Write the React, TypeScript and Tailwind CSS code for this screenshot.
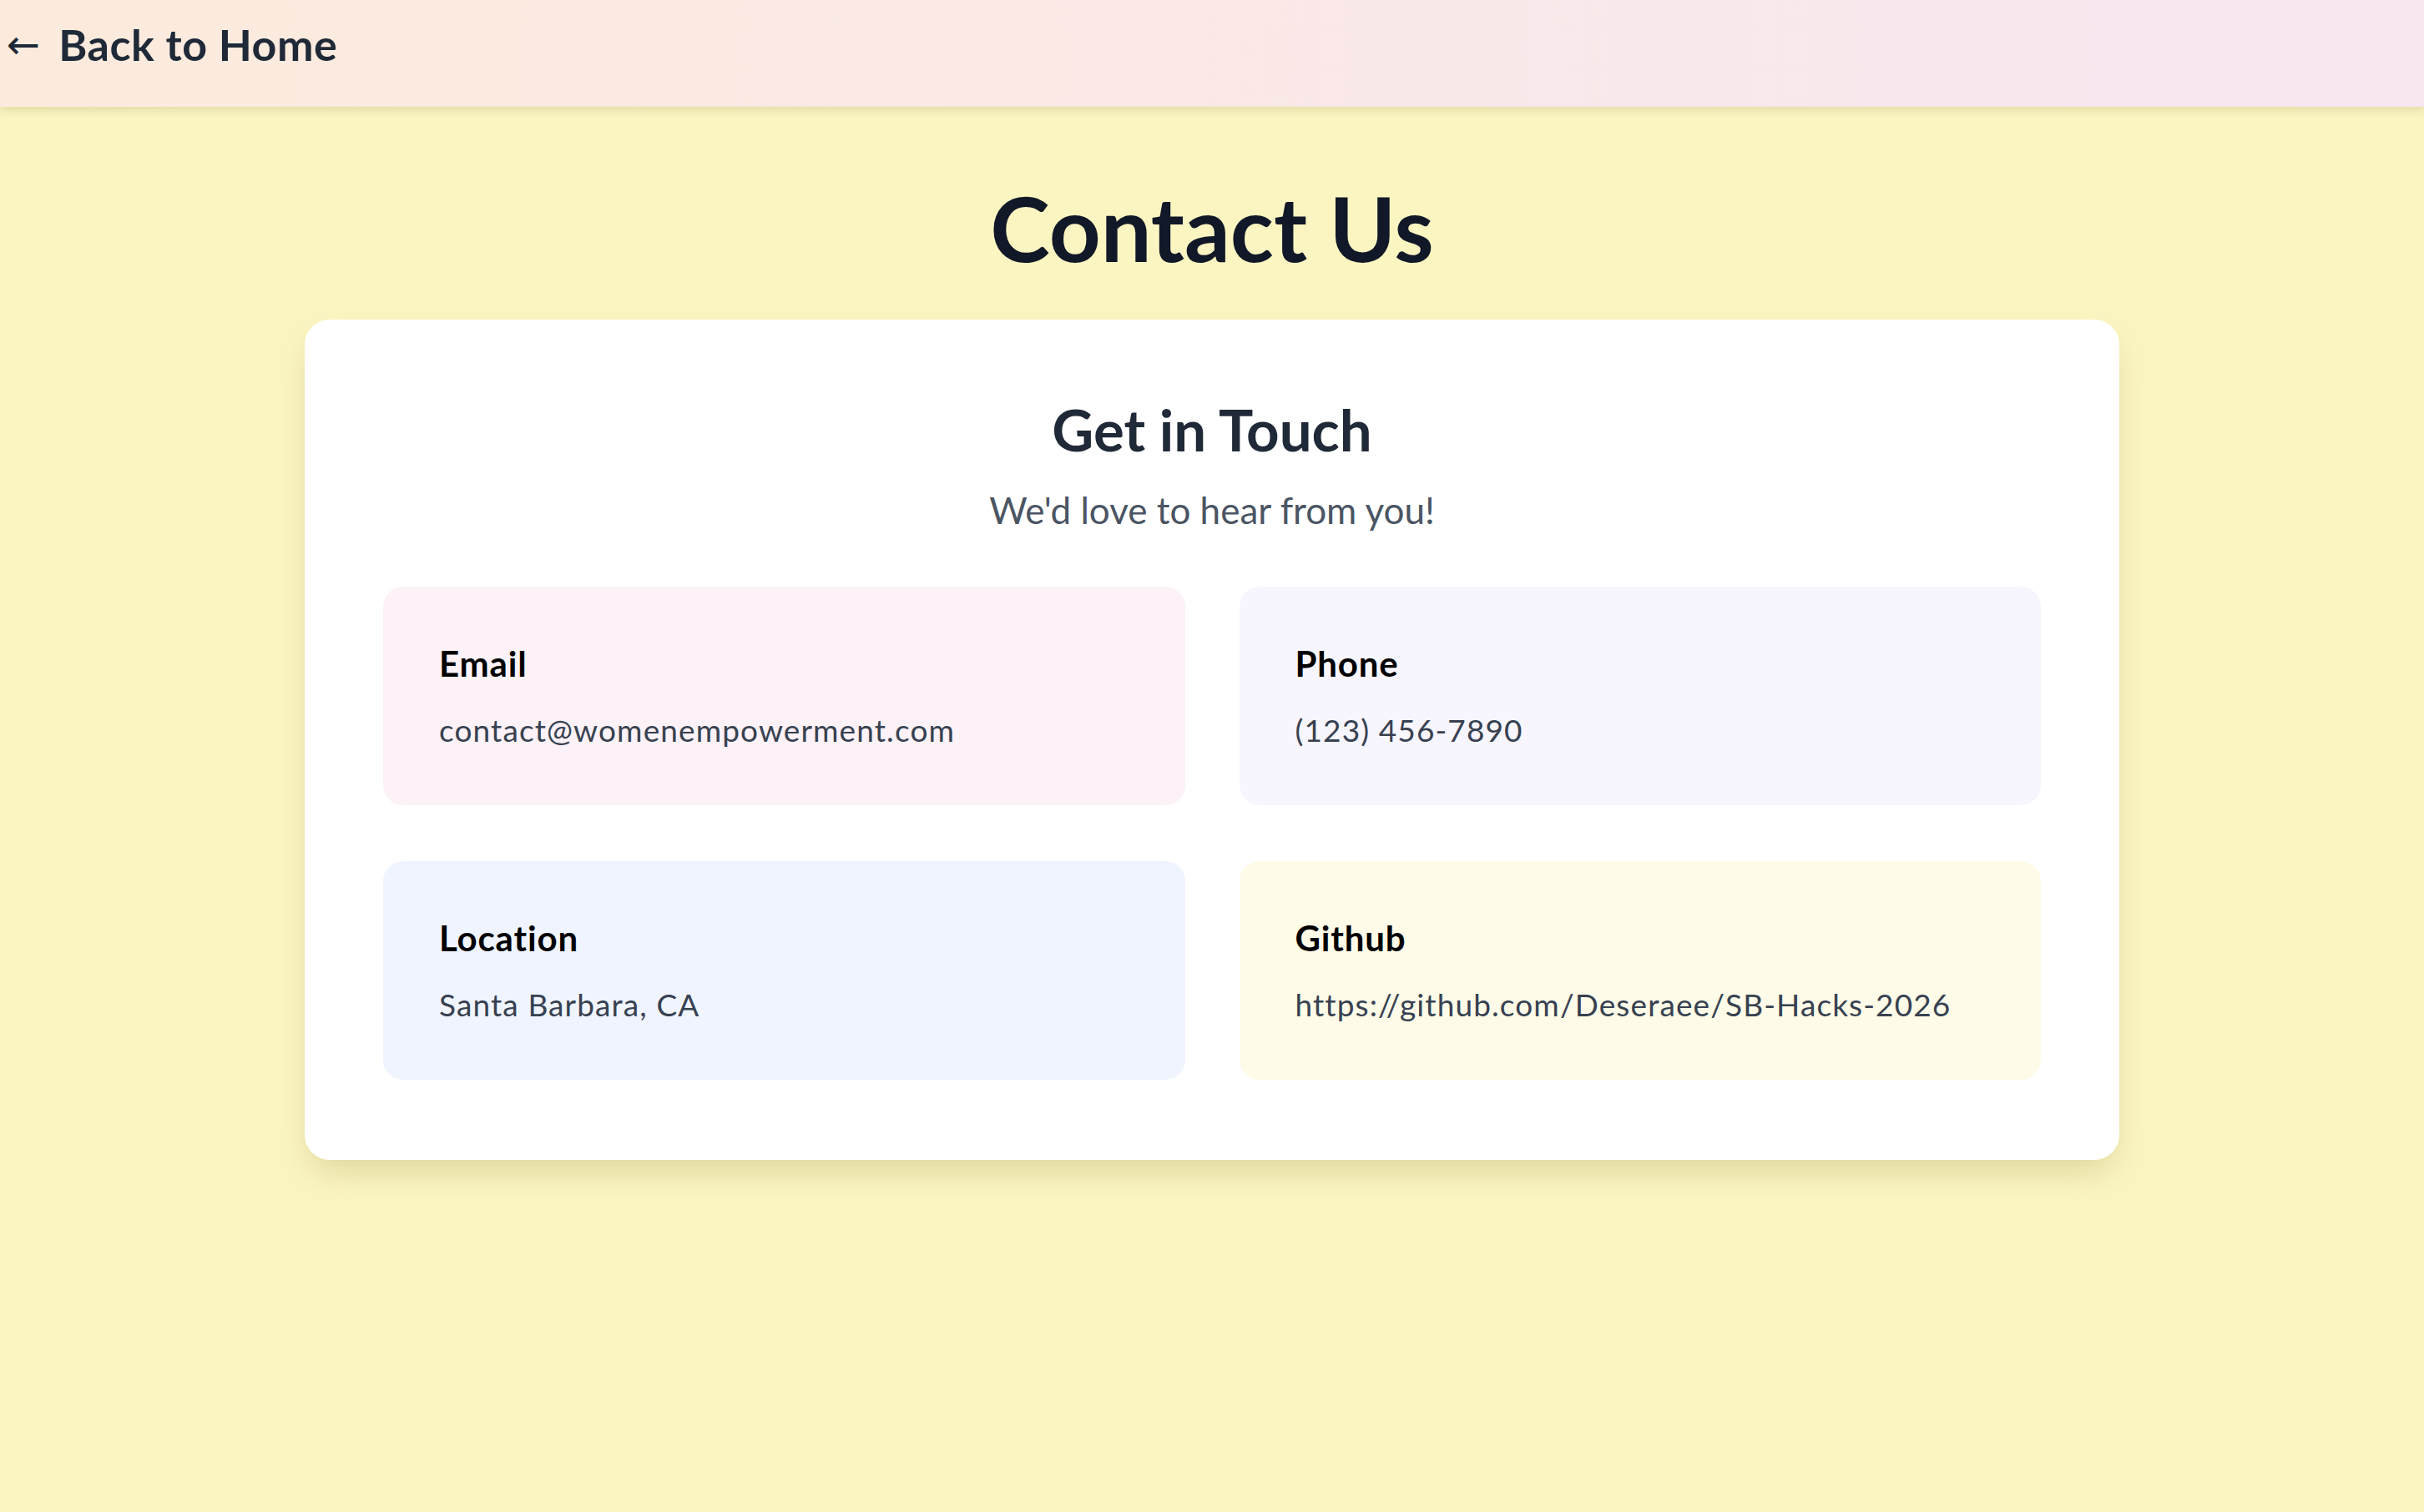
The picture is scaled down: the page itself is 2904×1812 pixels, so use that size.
import React from 'react';

// contact entries shown in the card grid
const contacts = [
  { label: 'Email', value: 'contact@womenempowerment.com', bg: 'bg-[#fcf2f7]' },
  { label: 'Phone', value: '(123) 456-7890', bg: 'bg-[#f7f5fe]' },
  { label: 'Location', value: 'Santa Barbara, CA', bg: 'bg-[#eff4fe]' },
  { label: 'Github', value: 'https://github.com/Deseraee/SB-Hacks-2026', bg: 'bg-[#fefbe8]' },
];

function ContactBox({ label, value, bg }: { label: string; value: string; bg: string }) {
  return (
    <div className={`${bg} rounded-[24px] pl-[67px] pr-[40px] pt-[64px] pb-[62px]`}>
      <h3 className="text-[42px] leading-[56px] font-bold tracking-[0.02em] text-black">{label}</h3>
      <p className="mt-[24px] text-[37px] leading-[56px] tracking-[0.03em] text-[#374151]">{value}</p>
    </div>
  );
}

export default function App() {
  return (
    <div
      className="min-h-screen w-full bg-[#fbf5c2]"
      style={{ fontFamily: 'Lato, "Open Sans", sans-serif' }}
    >
      {/* Top bar */}
      <header className="relative z-10 h-[128px] w-full flex items-center px-[8px] pb-[22px] bg-gradient-to-r from-[#fcebdc] to-[#f8e6f1] shadow-[0_4px_10px_rgba(120,100,40,0.18)]">
        <a href="#" className="flex items-center gap-[22px] text-[52px] font-bold text-[#1f2937] no-underline">
          <span className="text-[48px] font-normal" style={{ fontFamily: '"DejaVu Sans", sans-serif' }}>←</span>
          <span className="tracking-[0.01em]">Back to Home</span>
        </a>
      </header>

      <main className="flex flex-col items-center pt-[90px] pb-[120px]">
        <h1 className="text-[108px] leading-[108px] font-bold text-[#111827] mb-[57px]">Contact Us</h1>

        <section className="w-[2174px] bg-white rounded-[30px] shadow-[0_20px_40px_-8px_rgba(120,100,20,0.22)] px-[94px] pt-[96px] pb-[96px]">
          <div className="text-center">
            <h2 className="text-[69px] leading-[72px] font-bold text-[#1f2937]">Get in Touch</h2>
            <p className="mt-[32px] text-[44px] leading-[56px] text-[#4b5563]">We'd love to hear from you!</p>
          </div>

          <div className="mt-[64px] grid grid-cols-2 gap-x-[65px] gap-y-[67px]">
            {contacts.map((c) => (
              <ContactBox key={c.label} {...c} />
            ))}
          </div>
        </section>
      </main>
    </div>
  );
}
